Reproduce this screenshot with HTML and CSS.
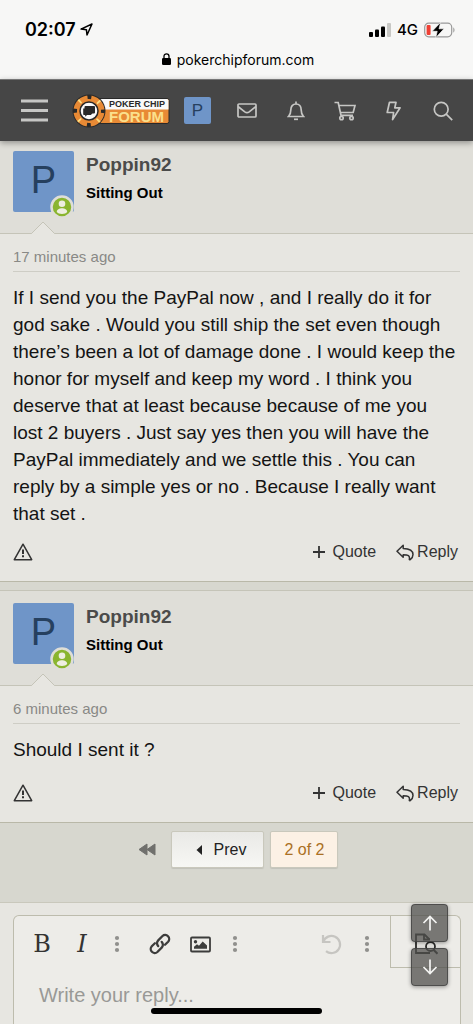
FILE: index.html
```html
<!DOCTYPE html>
<html lang="en">
<head>
<meta charset="utf-8">
<meta name="viewport" content="width=device-width, initial-scale=1">
<title>Poker Chip Forum</title>
<link rel="stylesheet" href="styles.css">
</head>
<body>
<svg class="defs" aria-hidden="true">
  <symbol id="online" viewBox="0 0 24 24">
    <circle cx="12" cy="12" r="10.500" fill="#8ab52f" stroke="#dfded7" stroke-width="2.500"/>
    <circle cx="12" cy="8.700" r="3.300" fill="#eeeee0"/>
    <path d="M6.800 17c0-5 10.400-5 10.400 0-1.600 2.600-8.800 2.600-10.400 0z" fill="#eeeee0"/>
  </symbol>
  <symbol id="warn" viewBox="0 0 20 18">
    <path d="M10 1.200 18.700 16.700H1.300z" fill="none" stroke="#333" stroke-width="1.500" stroke-linejoin="round"/>
    <path d="M10 6.500v4.600M10 12.300v2" stroke="#333" stroke-width="2"/>
  </symbol>
  <symbol id="reply" viewBox="0 0 18 17">
    <path d="M1 7.200 7.200 1.200V4.500C14 4.600 17 7 17 10.600c0 2-1 3.800-2.800 5.100-.5.300-1-.1-.8-.6.500-3.600-1-4.300-6.200-4.400V13.200z" fill="none" stroke="#333" stroke-width="1.500" stroke-linejoin="round"/>
  </symbol>
  <symbol id="dots" viewBox="0 0 6 18">
    <circle cx="3" cy="3" r="2.100"/><circle cx="3" cy="9" r="2.100"/><circle cx="3" cy="15" r="2.100"/>
  </symbol>
</svg>

<header class="device">
  <div class="status">
    <div class="clock">02:07
      <svg width="13" height="13" viewBox="0 0 13 13"><path d="M1 6.100 12 1 7 12 6.400 6.700z" fill="none" stroke="#000" stroke-width="1.500" stroke-linejoin="round"/></svg>
    </div>
    <div class="signals">
      <svg width="22" height="14" viewBox="0 0 22 14"><rect y="9" width="4" height="5" rx="1"/><rect x="6" y="6.500" width="4" height="7.500" rx="1"/><rect x="12" y="3.500" width="4" height="10.500" rx="1"/><rect x="18" width="4" height="14" rx="1" fill="#c8c8c5"/></svg>
      <span>4G</span>
      <svg width="31" height="16" viewBox="0 0 31 16"><rect x=".7" y="1.200" width="27" height="13.600" rx="4" fill="none" stroke="#999" stroke-width="1.200"/><rect x="2.600" y="3" width="4" height="10" rx="1" fill="#ef4034"/><path d="M29.300 5.500c1.600.6 1.600 4.400 0 5z" fill="#999"/><path d="M16.700.3 8.200 9.300h5l-1.500 6.500 8.300-9h-5z" stroke="#f7f7f6" stroke-width=".7"/></svg>
    </div>
  </div>
  <div class="address">
    <svg width="9" height="12" viewBox="0 0 9 12"><rect y="5" width="9" height="7" rx="1.300"/><path d="M2 6V3.300a2.500 2.500 0 0 1 5 0V6" fill="none" stroke="#000" stroke-width="1.300"/></svg>
    <span>pokerchipforum.com</span>
  </div>
</header>

<nav class="nav">
  <button class="menu" aria-label="Menu"><svg width="27" height="24" viewBox="0 0 27 24"><path d="M0 2h27M0 11.500h27M0 21h27" stroke="#c6c6c4" stroke-width="3"/></svg></button>
  <a class="logo" href="#" aria-label="Poker Chip Forum">
    <svg width="98" height="34" viewBox="0 0 98 34">
      <rect x="20" y="4.500" width="77" height="25" rx="2" fill="#e88a35" stroke="#292929"/>
      <path d="M20 5h75q1.500 0 1.500 1.500V15.500H20z" fill="#fafafa"/>
      <circle cx="17" cy="17" r="16.500" fill="#292929"/>
      <circle cx="17" cy="17" r="12.500" fill="none" stroke="#e88a35" stroke-width="6"/>
      <circle cx="17" cy="17" r="14" fill="none" stroke="#292929" stroke-width="4" stroke-dasharray="4 17.991" stroke-dashoffset="2"/>
      <circle cx="17" cy="17" r="13" fill="none" stroke="#f9dc83" stroke-width="5" stroke-dasharray="1.800 18.620" stroke-dashoffset="-9.310"/>
      <circle cx="17" cy="17" r="10.600" fill="#e88a35"/>
      <circle cx="17" cy="17" r="9" fill="#fafafa" stroke="#292929" stroke-width="1.500"/>
      <path d="M13.500 12h8.500q1 0 1 1v5.500q0 1-1 1h-1.500l-1.500 1v-1h-5.500q-1 0-1-1V13q0-1 1-1z" fill="#292929"/>
      <path d="M11.200 14.500h8v6.500H15l-1.800 1.700V21H12q-.8 0-.8-.8z" fill="#292929"/>
      <text class="logo-top" x="37" y="13">POKER CHIP</text>
      <text class="logo-bottom" x="37" y="28">FORUM</text>
    </svg>
  </a>
  <div class="tools">
    <a class="tool" href="#" aria-label="Account"><span class="mini">P</span></a>
    <a class="tool" href="#" aria-label="Inbox"><svg width="20" height="15" viewBox="0 0 20 15"><rect x="1" y="1" width="18" height="13" rx="1"/><path d="m1 3.500 6.800 5.400q2.200 1.600 4.400 0L19 3.500"/></svg></a>
    <a class="tool" href="#" aria-label="Alerts"><svg width="18" height="20" viewBox="0 0 18 20"><path d="M9 .5v2M1.500 15.500h15c-1.700-1.700-2.300-3-2.300-6.500 0-3.700-2-6-5.200-6S3.800 5.300 3.800 9c0 3.500-.6 4.800-2.300 6.500z"/><path d="M7 18.300h4"/></svg></a>
    <a class="tool" href="#" aria-label="Shop"><svg width="22" height="20" viewBox="0 0 22 20"><path d="M.5 1.500h3.700L7 14.300h12M4.900 4.500H21l-1.800 7H6.400"/><circle cx="7.500" cy="17" r="1.700"/><circle cx="17.500" cy="17" r="1.700"/></svg></a>
    <a class="tool" href="#" aria-label="What's new"><svg width="15" height="20" viewBox="0 0 15 20"><path d="M3.500 1.300h6.500L8.800 6.800h5.300L6.600 18.500 7.600 11.500H1.200z" stroke-linejoin="round"/></svg></a>
    <a class="tool" href="#" aria-label="Search"><svg width="20" height="20" viewBox="0 0 20 20"><circle cx="8.200" cy="8.200" r="6.900"/><path d="m13.200 13.200 6 6"/></svg></a>
  </div>
</nav>

<main>
  <article class="post">
    <header class="user user-tucked">
      <div class="avatar">P<svg class="badge" width="24" height="24"><use href="#online"/></svg></div>
      <div class="who"><a class="name" href="#">Poppin92</a><div class="role">Sitting Out</div></div>
      <svg class="notch" width="24" height="13" viewBox="0 0 24 13"><path d="M.5 12.500 12 1l11.500 11.500V13H.5z" fill="#e7e6e1"/><path d="M0 12.500h.5L12 1l11.500 11.500h.5" fill="none" stroke="#c5c4b8"/></svg>
    </header>
    <div class="body">
      <time class="date">17 minutes ago</time>
      <p class="text">If I send you the PayPal now , and I really do it for god sake . Would you still ship the set even though there’s been a lot of damage done . I would keep the honor for myself and keep my word . I think you deserve that at least because because of me you lost 2 buyers . Just say yes then you will have the PayPal immediately and we settle this . You can reply by a simple yes or no . Because I really want that set .</p>
      <footer class="actions">
        <button class="action report" aria-label="Report"><svg width="20" height="18"><use href="#warn"/></svg></button>
        <button class="action quote"><svg width="12" height="12" viewBox="0 0 12 12"><path d="M6 0v12M0 6h12" stroke="#333" stroke-width="1.800"/></svg>Quote</button>
        <button class="action"><svg width="18" height="17"><use href="#reply"/></svg>Reply</button>
      </footer>
    </div>
  </article>

  <article class="post">
    <header class="user">
      <div class="avatar">P<svg class="badge" width="24" height="24"><use href="#online"/></svg></div>
      <div class="who"><a class="name" href="#">Poppin92</a><div class="role">Sitting Out</div></div>
      <svg class="notch" width="24" height="13" viewBox="0 0 24 13"><path d="M.5 12.500 12 1l11.500 11.500V13H.5z" fill="#e7e6e1"/><path d="M0 12.500h.5L12 1l11.500 11.500h.5" fill="none" stroke="#c5c4b8"/></svg>
    </header>
    <div class="body">
      <time class="date">6 minutes ago</time>
      <p class="text">Should I sent it ?</p>
      <footer class="actions">
        <button class="action report" aria-label="Report"><svg width="20" height="18"><use href="#warn"/></svg></button>
        <button class="action quote"><svg width="12" height="12" viewBox="0 0 12 12"><path d="M6 0v12M0 6h12" stroke="#333" stroke-width="1.800"/></svg>Quote</button>
        <button class="action"><svg width="18" height="17"><use href="#reply"/></svg>Reply</button>
      </footer>
    </div>
  </article>

  <div class="pager">
    <a class="first" href="#" aria-label="First page"><svg width="18" height="13" viewBox="0 0 18 13"><path d="M9 1v11L1 6.500zM17 1v11L9 6.500z" fill="#70706d" stroke="#70706d" stroke-linejoin="round"/></svg></a>
    <a class="page prev" href="#"><svg width="6" height="10" viewBox="0 0 6 10"><path d="M6 0v10L.5 5z" fill="#222"/></svg>Prev</a>
    <a class="page current" href="#">2 of 2</a>
  </div>

  <section class="composer">
    <div class="editor">
      <div class="toolbar">
        <button class="letter" aria-label="Bold">B</button>
        <button class="letter italic" aria-label="Italic">I</button>
        <button class="more" aria-label="More text options"><svg width="6" height="18"><use href="#dots"/></svg></button>
        <button class="icon link" aria-label="Link"><svg width="22" height="22" viewBox="0 0 22 22"><g fill="none" stroke="#3c3c3b" stroke-width="2.300" stroke-linecap="round"><path d="M9.200 13.100a4 4 0 0 1 0-5.700L13.500 3a4 4 0 0 1 5.600 5.700L16 11.800"/><path d="M12.700 8.900a4 4 0 0 1 0 5.700L8.400 19a4 4 0 0 1-5.600-5.700l3.100-3.100"/></g></svg></button>
        <button class="icon" aria-label="Image"><svg width="21" height="17" viewBox="0 0 21 17"><rect x="1" y="1.500" width="19" height="14" rx="1" fill="none" stroke="#3c3c3b" stroke-width="1.800"/><circle cx="5.500" cy="5.700" r="1.700" fill="#3c3c3b"/><path d="M4 12.700v-2l3-2.500 2 1.500L12.700 5.500 17 9.500v3.200z" fill="#3c3c3b"/></svg></button>
        <button class="more" aria-label="More insert options"><svg width="6" height="18"><use href="#dots"/></svg></button>
        <button class="icon undo" aria-label="Undo"><svg width="22" height="22" viewBox="0 0 22 22"><path d="M2 2v7h7.500M2.300 8.800A8.600 8.600 0 1 1 5 18.200" fill="none" stroke="#c6c5c1" stroke-width="2.200"/></svg></button>
        <button class="more" aria-label="More actions"><svg width="6" height="18"><use href="#dots"/></svg></button>
        <button class="preview" aria-label="Preview"><svg width="24" height="22" viewBox="0 0 24 22"><g fill="none" stroke="#2c2c2b" stroke-width="1.800"><path d="M15.500 6.500 10.500 1.500H2V20h14"/><path d="M10 1.500v5h6"/><circle cx="16.500" cy="13.500" r="4.500"/><path d="m19.500 16.800 4 4" stroke-width="2.200"/></g></svg></button>
      </div>
      <textarea class="reply" aria-label="Reply" placeholder="Write your reply..."></textarea>
    </div>
  </section>
</main>

<div class="jump">
  <button aria-label="Scroll to top"><svg width="16" height="16" viewBox="0 0 16 16"><path d="M8 15.500V2M1.500 8 8 1.500 14.500 8"/></svg></button>
  <button aria-label="Scroll to bottom"><svg width="16" height="16" viewBox="0 0 16 16"><path d="M8 .5V14M1.500 8 8 14.500 14.500 8"/></svg></button>
</div>
<div class="home"></div>
</body>
</html>
```

FILE: styles.css
```css
* { box-sizing: border-box; }

body {
  margin: 0;
  min-height: 100vh;
  display: flex;
  flex-direction: column;
  background: #d7d7cf;
  color: #141414;
  font-family: "Liberation Sans", Arial, sans-serif;
}

button {
  padding: 0;
  border: 0;
  background: none;
  color: inherit;
  font: inherit;
}

a { color: inherit; text-decoration: none; }
svg { display: block; flex: none; }
.defs { position: absolute; width: 0; height: 0; }

/* Device bar */
.device {
  padding: 18px 18px 8px 25px;
  background: #f7f7f6;
  color: #000;
  font-family: Inter, sans-serif;
}
.status { display: flex; justify-content: space-between; align-items: center; height: 23px; }
.clock { display: flex; align-items: center; gap: 4px; font-size: 18px; font-weight: 600; }
.signals { display: flex; align-items: center; gap: 6px; font-size: 15px; font-weight: 500; }
.address {
  display: flex;
  justify-content: center;
  align-items: center;
  gap: 6px;
  height: 30px;
  padding: 6px 4px 0 0;
  font-size: 14px;
}

/* Site navigation */
.nav {
  position: relative;
  z-index: 1;
  display: flex;
  align-items: center;
  height: 62px;
  padding: 0 6px 0 21px;
  background: #464646;
  border-top: 1px solid #777;
  box-shadow: 0 2px 6px rgba(0, 0, 0, .35);
}
.logo { margin-left: 24px; }
.logo-top { font: 700 9px "Liberation Sans", sans-serif; fill: #292929; }
.logo-bottom { font: 700 15px "Liberation Sans", sans-serif; fill: #fbe08c; }
.tools { display: flex; margin-left: auto; }
.tool { display: flex; justify-content: center; align-items: center; width: 49px; height: 48px; }
.tool svg { fill: none; stroke: #c6c6c4; stroke-width: 1.700; }
.mini {
  width: 27px;
  border-radius: 2px;
  background: #6f95c8;
  color: #26405f;
  font-size: 17px;
  line-height: 27px;
  text-align: center;
}

/* Posts */
.post { margin-bottom: 8px; border-bottom: 1px solid #b9b8a8; background: #e7e6e1; }
.user {
  position: relative;
  display: flex;
  gap: 12px;
  padding: 12px 13px 21px;
  background: #dfded8;
  border-top: 1px solid #c5c4b8;
  border-bottom: 1px solid #c5c4b8;
}
.user-tucked { padding-top: 10px; border-top: 0; }
.avatar {
  position: relative;
  width: 61px;
  height: 61px;
  border-radius: 2px;
  background: #6f95c8;
  color: #26405f;
  font-size: 38px;
  line-height: 58px;
  text-align: center;
}
.badge { position: absolute; right: 0; bottom: -7px; }
.name { display: block; color: #4b4b4a; font-size: 19px; font-weight: 700; line-height: 28px; }
.role { color: #000; font-size: 15px; font-weight: 700; line-height: 27px; }
.notch { position: absolute; left: 31px; bottom: -1px; }
.body { padding: 11px 13px 19px; }
.date {
  display: block;
  padding-bottom: 2px;
  border-bottom: 1px solid #cecdc5;
  color: #898986;
  font-size: 15px;
  line-height: 24px;
}
.text { min-height: 32px; margin: 12px 0 15px; font-size: 19px; line-height: 27px; }
.actions {
  display: flex;
  align-items: center;
  gap: 20px;
  padding-right: 2px;
  color: #333;
  font-size: 16px;
}
.action { display: flex; align-items: center; gap: 3px; height: 20px; }
.quote { gap: 8px; }
.report { margin-right: auto; }

/* Pagination */
.pager { display: flex; justify-content: center; gap: 6px; padding: 0 6px 34px 0; font-size: 16px; }
.first { display: flex; align-items: center; padding: 0 9px; }
.page {
  display: flex;
  align-items: center;
  gap: 12px;
  height: 37px;
  padding: 0 13px;
  border: 1px solid #c9c8bc;
  border-radius: 2px;
  box-shadow: 0 1px 1px rgba(0, 0, 0, .1);
}
.prev { padding: 0 17px 0 24px; background: linear-gradient(#e9e9e6, #f7f7f4); color: #222; }
.current { background: #fcf1e5; color: #aa7024; }

/* Reply editor */
main { display: flex; flex: 1; flex-direction: column; }
.composer {
  display: flex;
  flex: 1;
  padding: 12px 12px 0 13px;
  border-top: 1px solid #c9c8bc;
  background: #e7e6e1;
}
.editor {
  display: flex;
  flex: 1;
  flex-direction: column;
  border: 1px solid #bdbcad;
  border-bottom: 0;
  border-radius: 6px 6px 0 0;
  background: #edece8;
}
.toolbar { display: flex; align-items: center; height: 52px; padding-left: 8px; }
.toolbar button { display: flex; justify-content: center; align-items: center; width: 40px; height: 52px; }
.toolbar .letter {
  padding-top: 4px;
  color: #333332;
  font-family: "DejaVu Serif", serif;
  font-size: 24px;
}
.toolbar .italic { font-style: italic; }
.toolbar .more { width: 30px; padding-top: 4px; fill: #90908d; }
.toolbar .icon { padding-top: 4px; }
.toolbar .link { margin-left: 8px; }
.toolbar .undo { margin-left: auto; }
.toolbar .preview {
  width: 70px;
  margin-left: 8px;
  padding-top: 4px;
  border-left: 1px solid #bdbcad;
  border-bottom: 1px solid #bdbcad;
}
.reply {
  flex: 1;
  width: 100%;
  min-height: 54px;
  padding: 15px 25px;
  border: 0;
  outline: 0;
  resize: none;
  background: none;
  font: 20px/24px "Liberation Sans", Arial, sans-serif;
}
.reply::placeholder { color: #999996; }

/* Overlays */
.jump {
  position: fixed;
  right: 25px;
  bottom: 38px;
  z-index: 2;
  display: grid;
  gap: 6px;
}
.jump button {
  display: flex;
  justify-content: center;
  align-items: center;
  width: 37px;
  height: 38px;
  border: 1px solid rgba(60, 60, 60, .7);
  border-radius: 4px;
  background: rgba(80, 80, 78, .75);
  box-shadow: 0 1px 4px rgba(0, 0, 0, .4);
}
.jump svg { fill: none; stroke: #f4f4f2; stroke-width: 1.700; }
.home {
  position: fixed;
  bottom: 10px;
  left: 50%;
  z-index: 3;
  width: 36%;
  height: 6px;
  margin-left: -18%;
  border-radius: 3px;
  background: #000;
}
```
